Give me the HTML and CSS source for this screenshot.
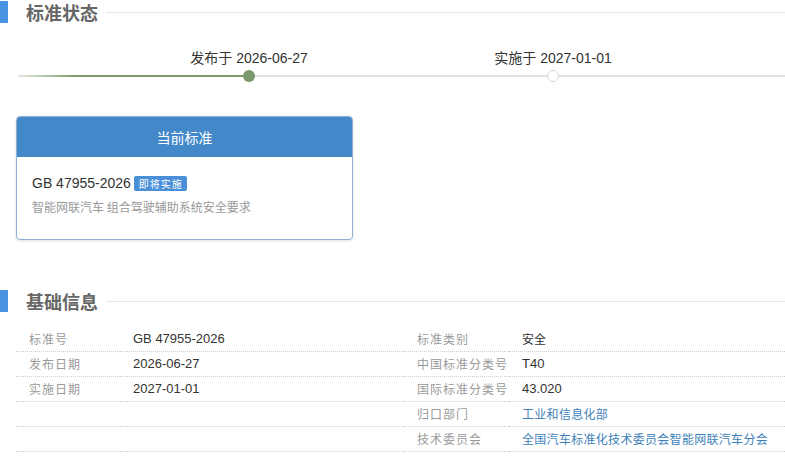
FILE: index.html
```html
<!DOCTYPE html>
<html lang="zh-CN">
<head>
<meta charset="utf-8">
<link rel="stylesheet" href="styles.css">
</head>
<body>
<section class="section">
  <div class="sec-head">
    <span class="sec-bar"></span>
    <h2 class="sec-title">标准状态</h2>
    <span class="sec-line"></span>
  </div>
  <div class="timeline">
    <div class="seg seg-done"></div>
    <div class="node">
      <span class="node-label">发布于 2026-06-27</span>
      <span class="dot dot-done"></span>
    </div>
    <div class="seg seg-mid"></div>
    <div class="node">
      <span class="node-label">实施于 2027-01-01</span>
      <span class="dot dot-todo"></span>
    </div>
    <div class="seg seg-rest"></div>
  </div>
  <div class="card">
    <div class="card-head">当前标准</div>
    <div class="card-body">
      <div class="card-code">GB 47955-2026<span class="badge">即将实施</span></div>
      <div class="card-desc">智能网联汽车 组合驾驶辅助系统安全要求</div>
    </div>
  </div>
</section>
<section class="section section-info">
  <div class="sec-head">
    <span class="sec-bar"></span>
    <h2 class="sec-title">基础信息</h2>
    <span class="sec-line"></span>
  </div>
  <div class="info">
    <div class="cell label">标准号</div>
    <div class="cell value">GB 47955-2026</div>
    <div class="cell label">标准类别</div>
    <div class="cell value cjk">安全</div>

    <div class="cell label">发布日期</div>
    <div class="cell value">2026-06-27</div>
    <div class="cell label">中国标准分类号</div>
    <div class="cell value">T40</div>

    <div class="cell label">实施日期</div>
    <div class="cell value">2027-01-01</div>
    <div class="cell label">国际标准分类号</div>
    <div class="cell value">43.020</div>

    <div class="cell label"></div>
    <div class="cell value"></div>
    <div class="cell label">归口部门</div>
    <div class="cell value"><a class="link">工业和信息化部</a></div>

    <div class="cell label"></div>
    <div class="cell value"></div>
    <div class="cell label">技术委员会</div>
    <div class="cell value"><a class="link">全国汽车标准化技术委员会智能网联汽车分会</a></div>
  </div>
</section>
</body>
</html>
```

FILE: styles.css
```css
* { box-sizing: border-box; }
html, body {
  margin: 0;
  padding: 0;
  background: #fff;
  font-family: "Liberation Sans", Arial, "Noto Sans CJK SC", sans-serif;
  color: #333;
  overflow: hidden;
}
.section { display: block; }
.section-info { margin-top: 49px; }

.sec-head {
  display: flex;
  align-items: center;
  height: 24px;
}
.sec-bar {
  width: 8px;
  height: 22px;
  background: #4a93e0;
  flex: none;
}
.sec-title {
  margin: 0 0 0 18px;
  font-size: 18px;
  line-height: 24px;
  font-weight: bold;
  color: #666;
  font-family: "Noto Sans CJK SC", sans-serif;
}
.sec-line {
  flex: 1;
  height: 1px;
  background: #e6e6e6;
  margin-left: 8px;
}

.timeline {
  display: flex;
  align-items: flex-end;
  margin-top: 24px;
  padding-left: 18px;
}
.seg {
  height: 2px;
  margin-bottom: 5px;
}
.seg-done {
  width: 231px;
  background: linear-gradient(to right, rgba(125,155,108,0.2), #7d9b6c 25%, #7d9b6c);
}
.seg-mid {
  width: 304px;
  background: #e2e2e2;
}
.seg-rest {
  flex: 1;
  background: #e2e2e2;
}
.node {
  width: 0;
  display: flex;
  flex-direction: column;
  align-items: center;
  position: relative;
  z-index: 1;
}
.node-label {
  white-space: nowrap;
  font-size: 14px;
  line-height: 20px;
  color: #333;
  margin-bottom: 2px;
}
.dot {
  width: 12px;
  height: 12px;
  border-radius: 50%;
  flex: none;
}
.dot-done { background: #7b9a6b; }
.dot-todo { background: #fff; border: 1px solid #d8d8d8; }

.card {
  margin: 34px 0 0 16px;
  width: 337px;
  height: 124px;
  border: 1px solid #8fb1cf;
  border-radius: 4px;
  overflow: hidden;
  box-shadow: 0 1px 3px rgba(0,0,0,0.12);
}
.card-head {
  height: 40px;
  line-height: 40px;
  background: #4388c8;
  color: #fff;
  text-align: center;
  font-size: 14px;
  font-family: "Noto Sans CJK SC", sans-serif;
}
.card-body {
  padding: 16px 0 0 15px;
}
.card-code {
  display: flex;
  align-items: center;
  font-size: 14px;
  line-height: 20px;
  color: #333;
}
.badge {
  margin-left: 3px;
  background: #4a90d9;
  color: #fff;
  font-size: 10px;
  line-height: 15px;
  padding: 0 4px 0 5px;
  letter-spacing: 1px;
  border-radius: 2px;
  font-family: "Noto Sans CJK SC", sans-serif;
}
.card-desc {
  margin-top: 6px;
  font-size: 12px;
  line-height: 16px;
  color: #999;
  font-family: "Noto Sans CJK SC", sans-serif;
}

.info {
  margin: 14px 0 0 16px;
  display: grid;
  grid-template-columns: 104px 284px 105px 1fr;
}
.cell {
  height: 25px;
  line-height: 24px;
  border-bottom: 1px dotted #cfcfcf;
  padding-left: 13px;
  white-space: nowrap;
}
.label {
  font-size: 12px;
  letter-spacing: 1px;
  color: #999;
  font-family: "Noto Sans CJK SC", sans-serif;
}
.value {
  font-size: 13px;
  color: #333;
}
.cjk {
  font-size: 12px;
  font-family: "Noto Sans CJK SC", sans-serif;
}
.link {
  color: #3d7fb8;
  font-size: 12px;
  letter-spacing: 0.3px;
  font-family: "Noto Sans CJK SC", sans-serif;
  text-decoration: none;
}
```
